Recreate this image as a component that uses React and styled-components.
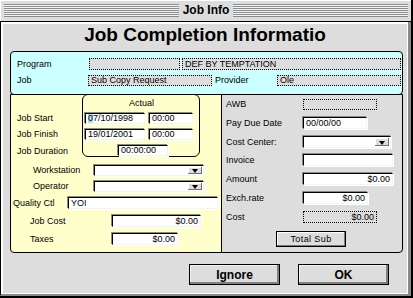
import React from "react";
import styled, { createGlobalStyle } from "styled-components";

const GlobalStyle = createGlobalStyle`
  html, body { margin: 0; padding: 0; background: #fff; }
  body {
    font-family: "Liberation Sans", Arial, sans-serif;
    font-size: 9px;
    color: #000;
  }
  * { box-sizing: border-box; }
`;

const Window = styled.div`
  width: 413px;
  height: 298px;
  background: #dddddd;
  border-right: 2px solid #000;
  border-bottom: 2px solid #000;
  display: flex;
  flex-direction: column;
`;

const TitleBar = styled.div`
  flex: none;
  height: 22px;
  border-bottom: 1px solid #000;
  box-shadow: inset 1px 1px 0 #fff;
  display: flex;
  align-items: center;
  padding: 0 3px 0 4px;
`;

const Stripes = styled.div`
  flex: 1;
  height: 13px;
  background: repeating-linear-gradient(to bottom, #8c8c8c 0 1px, #f4f4f4 1px 2px);
`;

const WindowTitle = styled.div`
  padding: 0 4px;
  font-size: 12px;
  font-weight: bold;
  line-height: 13px;
`;

const Body = styled.div`
  flex: 1;
  border-left: 1px solid #000;
  border-right: 3px solid #8a8a8a;
  border-bottom: 2px solid #8a8a8a;
  box-shadow: inset 2px 2px 0 #fff, inset -1px -1px 0 #fff;
  padding: 2px 0 0 9px;
  display: flex;
  flex-direction: column;
`;

const Heading = styled.h1`
  margin: 0 0 5px 0;
  width: 390px;
  height: 22px;
  line-height: 22px;
  font-size: 19px;
  font-weight: bold;
  text-align: center;
  white-space: nowrap;
`;

const InfoPanel = styled.div`
  width: 393px;
  height: 44px;
  border: 1px solid #000;
  border-radius: 4px;
  background: #ccffff;
  padding: 6px 0 0 6px;
  display: flex;
  flex-direction: column;
  gap: 5px;
  position: relative;
  z-index: 1;
`;

const Row = styled.div`
  display: flex;
  align-items: center;
  height: ${(p) => p.$h || 12}px;
  padding-left: ${(p) => p.$indent || 0}px;
`;

const Label = styled.span`
  flex: none;
  width: ${(p) => p.$w}px;
  padding-left: ${(p) => p.$pad || 0}px;
  white-space: nowrap;
  line-height: 1;
`;

const DottedField = styled.div`
  flex: none;
  width: ${(p) => p.$w}px;
  height: 100%;
  margin-left: ${(p) => p.$ml || 0}px;
  border: 1px dotted #000;
  background: #dddddd;
  padding: 0 2px;
  display: flex;
  align-items: center;
  justify-content: ${(p) => (p.$right ? "flex-end" : "flex-start")};
  white-space: nowrap;
  overflow: hidden;
  line-height: 1;
`;

const Field = styled.div`
  flex: none;
  width: ${(p) => p.$w}px;
  height: 100%;
  margin-left: ${(p) => p.$ml || 0}px;
  background: #fff;
  border-style: solid;
  border-width: 1px;
  border-color: #000 #f4f4f4 #f4f4f4 #000;
  box-shadow: -1px -1px 0 #8a8a8a, 1px 1px 0 #fff;
  padding: 0 2px 0 2px;
  display: flex;
  align-items: center;
  justify-content: ${(p) => (p.$right ? "flex-end" : "flex-start")};
  white-space: nowrap;
  overflow: hidden;
  line-height: 1;
`;

const Caret = styled.span`
  background: #a8dcff;
`;

const DropField = styled(Field)`
  padding: 1px;
  justify-content: flex-end;
`;

const DropArrow = styled.span`
  flex: none;
  width: 14px;
  height: 100%;
  background: #dddddd;
  box-shadow: inset -1px -1px 0 #707070, inset 1px 1px 0 #fff;
  display: flex;
  align-items: center;
  justify-content: center;
  &::after {
    content: "";
    border-top: 4px solid #000;
    border-left: 3.5px solid transparent;
    border-right: 3.5px solid transparent;
    margin-top: 1px;
  }
`;

const Panels = styled.div`
  display: flex;
  margin-top: -1px;
`;

const YellowPanel = styled.div`
  width: 212px;
  height: 159px;
  background: #ffffcc;
  border: 1px solid #000;
  border-radius: 0 0 0 4px;
  display: flex;
  flex-direction: column;
`;

const GrayPanel = styled.div`
  width: 182px;
  height: 159px;
  margin-left: -1px;
  background: #dddddd;
  border: 1px solid #000;
  border-radius: 0 0 4px 0;
  padding: 4px 0 0 4px;
  display: grid;
  grid-template-rows: 18px 19px 18px 19px 19px 19px 20px 16px;
  align-items: start;
`;

const TopSection = styled.div`
  display: flex;
  height: 62px;
`;

const LabelColumn = styled.div`
  width: 71px;
  padding: 18px 0 0 6px;
  display: flex;
  flex-direction: column;
  gap: 5px;
`;

const GroupBox = styled.div`
  width: 118px;
  height: 63px;
  margin-top: -1px;
  border: 1px solid #000;
  border-radius: 6px;
  padding: 2px 0 0 1px;
  display: flex;
  flex-direction: column;
  gap: 5px;
`;

const GroupTitle = styled.div`
  height: 12px;
  line-height: 12px;
  text-align: center;
  margin-bottom: -1px;
`;

const LowerSection = styled.div`
  margin-top: 8px;
  display: grid;
  grid-template-rows: 16px 16px 18px 18px 12px;
  align-items: start;
`;

const SmallButton = styled.button`
  justify-self: center;
  width: 70px;
  height: 16px;
  margin-left: -6px;
  padding: 0;
  border: 1px solid #000;
  background: #dddddd;
  box-shadow: inset -1px -1px 0 #7a7a7a, inset 1px 1px 0 #fff;
  font-family: "Liberation Sans", Arial, sans-serif;
  font-size: 9px;
  letter-spacing: 0.4px;
  color: #000;
`;

const ButtonRow = styled.div`
  display: flex;
  justify-content: flex-end;
  gap: 18px;
  margin-top: 11px;
  padding-right: 19px;
`;

const DialogButton = styled.button`
  width: 91px;
  height: 21px;
  padding: 0;
  border: 1px solid #000;
  background: #dddddd;
  box-shadow: inset -2px -2px 0 #808080, inset 1px 1px 0 #f2f2f2;
  font-family: "Liberation Sans", Arial, sans-serif;
  font-size: 12px;
  font-weight: bold;
  color: #000;
`;

const Dropdown = ({ w }) => (
  <DropField $w={w}>
    <DropArrow />
  </DropField>
);

export default function App() {
  return (
    <>
      <GlobalStyle />
      <Window>
        <TitleBar>
          <Stripes />
          <WindowTitle>Job Info</WindowTitle>
          <Stripes />
        </TitleBar>
        <Body>
          <Heading>Job Completion Informatio</Heading>

          <InfoPanel>
            <Row $h={12}>
              <Label $w={72}>Program</Label>
              <DottedField $w={91} />
              <DottedField $w={219} $ml={2}>DEF BY TEMPTATION</DottedField>
            </Row>
            <Row $h={11}>
              <Label $w={71}>Job</Label>
              <DottedField $w={124}>Sub Copy Request</DottedField>
              <Label $w={65} $pad={3}>Provider</Label>
              <DottedField $w={124}>Ole</DottedField>
            </Row>
          </InfoPanel>

          <Panels>
            <YellowPanel>
              <TopSection>
                <LabelColumn>
                  <Row $h={11}><Label $w={60}>Job Start</Label></Row>
                  <Row $h={11}><Label $w={60}>Job Finish</Label></Row>
                  <Row $h={12}><Label $w={60}>Job Duration</Label></Row>
                </LabelColumn>
                <GroupBox>
                  <GroupTitle>Actual</GroupTitle>
                  <Row $h={11} $indent={1}>
                    <Field $w={60}><Caret>0</Caret>7/10/1998</Field>
                    <Field $w={44} $ml={4}>00:00</Field>
                  </Row>
                  <Row $h={11} $indent={1}>
                    <Field $w={60}>19/01/2001</Field>
                    <Field $w={44} $ml={4}>00:00</Field>
                  </Row>
                  <Row $h={12} $indent={34}>
                    <Field $w={50}>00:00:00</Field>
                  </Row>
                </GroupBox>
              </TopSection>

              <LowerSection>
                <Row $h={11} $indent={22}>
                  <Label $w={61}>Workstation</Label>
                  <Dropdown w={110} />
                </Row>
                <Row $h={11} $indent={22}>
                  <Label $w={61}>Operator</Label>
                  <Dropdown w={110} />
                </Row>
                <Row $h={12} $indent={2}>
                  <Label $w={55}>Quality Ctl</Label>
                  <Field $w={150}>YOI</Field>
                </Row>
                <Row $h={12} $indent={19}>
                  <Label $w={82}>Job Cost</Label>
                  <Field $w={89} $right>$0.00</Field>
                </Row>
                <Row $h={12} $indent={19}>
                  <Label $w={82}>Taxes</Label>
                  <Field $w={66} $right>$0.00</Field>
                </Row>
              </LowerSection>
            </YellowPanel>

            <GrayPanel>
              <Row $h={11}>
                <Label $w={77}>AWB</Label>
                <DottedField $w={74} />
              </Row>
              <Row $h={12}>
                <Label $w={77}>Pay Due Date</Label>
                <Field $w={64}>00/00/00</Field>
              </Row>
              <Row $h={12}>
                <Label $w={77}>Cost Center:</Label>
                <Dropdown w={88} />
              </Row>
              <Row $h={12}>
                <Label $w={77}>Invoice</Label>
                <Field $w={90} />
              </Row>
              <Row $h={12}>
                <Label $w={77}>Amount</Label>
                <Field $w={90} $right>$0.00</Field>
              </Row>
              <Row $h={12}>
                <Label $w={77}>Exch.rate</Label>
                <Field $w={65} $right>$0.00</Field>
              </Row>
              <Row $h={12}>
                <Label $w={77}>Cost</Label>
                <DottedField $w={74} $right>$0.00</DottedField>
              </Row>
              <SmallButton>Total Sub</SmallButton>
            </GrayPanel>
          </Panels>

          <ButtonRow>
            <DialogButton>Ignore</DialogButton>
            <DialogButton>OK</DialogButton>
          </ButtonRow>
        </Body>
      </Window>
    </>
  );
}
